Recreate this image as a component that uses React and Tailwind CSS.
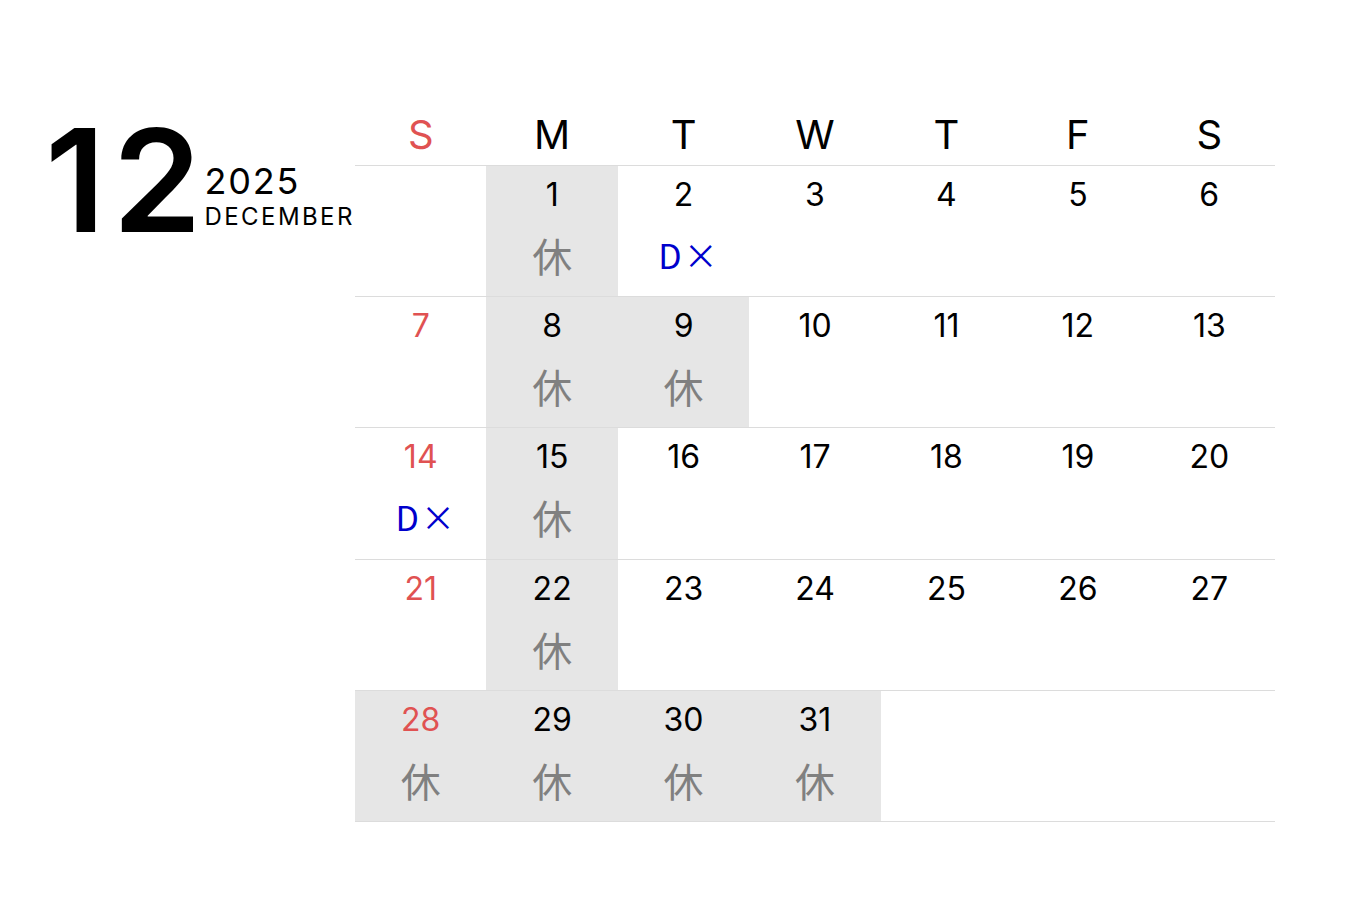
import React from 'react';

const days = ['S', 'M', 'T', 'W', 'T', 'F', 'S'];

// December 2025 starts on a Monday
const weeks = [
  [null, 1, 2, 3, 4, 5, 6],
  [7, 8, 9, 10, 11, 12, 13],
  [14, 15, 16, 17, 18, 19, 20],
  [21, 22, 23, 24, 25, 26, 27],
  [28, 29, 30, 31, null, null, null],
];

const holidays = [1, 8, 9, 15, 22, 28, 29, 30, 31];
const dx = [2, 14];

const DayCell = ({ day, col }) => {
  if (!day) return <div className="h-full" />;
  const off = holidays.includes(day);
  return (
    <div className={`h-full flex flex-col items-center ${off ? 'bg-[#e6e6e6]' : ''}`}>
      <div className={`mt-[13px] h-[32px] text-[32px] leading-none ${col === 0 ? 'text-[#e05252]' : 'text-black'}`}>
        {day}
      </div>
      <div className="mt-[22px] h-[44px] flex items-center justify-center">
        {off && (
          <span className="text-[40px] leading-none text-[#808080]" style={{ fontFamily: '"Noto Sans CJK JP", sans-serif' }}>
            休
          </span>
        )}
        {dx.includes(day) && (
          <span className="pl-[9px] flex items-center gap-[2px] text-[34px] leading-none text-[#0000cc]" style={{ fontFamily: '"Noto Sans CJK JP", sans-serif' }}>
            <span>D</span>
            <span>×</span>
          </span>
        )}
      </div>
    </div>
  );
};

export default function App() {
  return (
    <div className="w-[1351px] h-[901px] bg-white flex" style={{ fontFamily: 'Inter, "Noto Sans CJK JP", sans-serif' }}>
      <div className="w-[355px] shrink-0 flex pl-[45px] pt-[108px]">
        <div className="text-[143px] font-semibold leading-none tracking-[7px] text-black h-[143px]">12</div>
        <div className="ml-[-4px] flex flex-col">
          <div className="mt-[55px] text-[36px] leading-none tracking-[1.8px] text-black">2025</div>
          <div className="mt-[6px] text-[24px] leading-none tracking-[2.4px] text-black">DECEMBER</div>
        </div>
      </div>
      <div className="w-[920px] pt-[110px]">
        <div className="grid grid-cols-7 h-[56px] pb-[5px] border-b border-[#dcdcdc]">
          {days.map((d, i) => (
            <div key={i} className={`flex items-center justify-center text-[40px] leading-none ${i === 0 ? 'text-[#e05252]' : 'text-black'}`}>
              {d}
            </div>
          ))}
        </div>
        {weeks.map((w, r) => (
          <div key={r} className="grid grid-cols-7 h-[131.2px] border-b border-[#dcdcdc]">
            {w.map((d, c) => (
              <DayCell key={c} day={d} col={c} />
            ))}
          </div>
        ))}
      </div>
    </div>
  );
}
